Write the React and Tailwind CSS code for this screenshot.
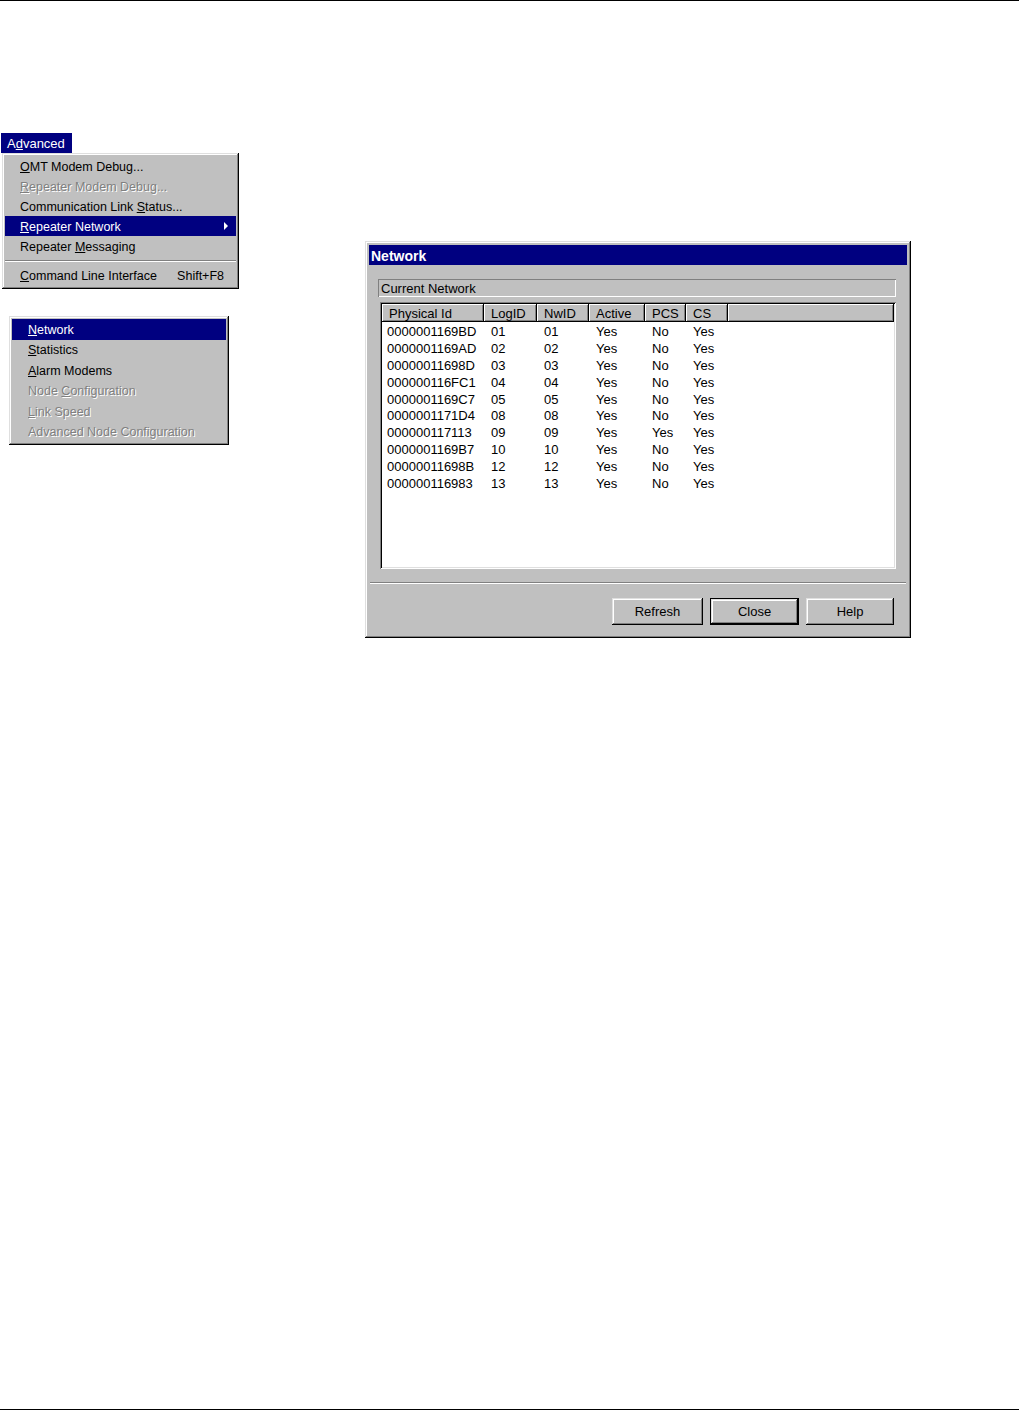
import React from "react";

const FONT = "font-['Liberation_Sans',Arial,sans-serif]";
const DIS = "text-[#808080] [text-shadow:1px_1px_0_#ffffff]";
const RAISED =
  "shadow-[inset_-1px_-1px_0_#000000,inset_1px_1px_0_#dfdfdf,inset_-2px_-2px_0_#808080,inset_2px_2px_0_#ffffff]";

function MenuItem({ children, disabled, hl, arrow, shortcut, h = "h-[20px] pt-[2px]", pl = "pl-[15px]" }) {
  return (
    <div
      className={`${h} ${pl} flex items-center pr-[12px] whitespace-nowrap ${
        hl ? "bg-[#000080] text-white" : disabled ? DIS : "text-black"
      }`}
    >
      <span className="flex-1">{children}</span>
      {shortcut && <span>{shortcut}</span>}
      {arrow && (
        <svg width="5" height="8" viewBox="0 0 5 8" className="mr-[-5px] mt-[-2px]">
          <path d="M0 0 L4 4 L0 8 Z" fill={hl ? "#ffffff" : "#000000"} />
        </svg>
      )}
    </div>
  );
}

const rows = [
  ["0000001169BD", "01", "01", "Yes", "No", "Yes"],
  ["0000001169AD", "02", "02", "Yes", "No", "Yes"],
  ["00000011698D", "03", "03", "Yes", "No", "Yes"],
  ["000000116FC1", "04", "04", "Yes", "No", "Yes"],
  ["0000001169C7", "05", "05", "Yes", "No", "Yes"],
  ["0000001171D4", "08", "08", "Yes", "No", "Yes"],
  ["000000117113", "09", "09", "Yes", "Yes", "Yes"],
  ["0000001169B7", "10", "10", "Yes", "No", "Yes"],
  ["00000011698B", "12", "12", "Yes", "No", "Yes"],
  ["000000116983", "13", "13", "Yes", "No", "Yes"],
];
const headers = ["Physical Id", "LogID", "NwID", "Active", "PCS", "CS"];
const widths = ["w-[102px]", "w-[53px]", "w-[52px]", "w-[56px]", "w-[41px]", "w-[42px]"];

function Btn({ children, def }) {
  return (
    <div
      className={`h-[27px] flex items-center justify-center bg-[#c0c0c0] text-[13px] text-black ${
        def ? "border border-black" : ""
      }`}
      style={{ width: def ? 89 : children === "Help" ? 88 : 91 }}
    >
      <div className={`w-full h-full flex items-center justify-center ${RAISED}`}>{children}</div>
    </div>
  );
}

export default function App() {
  return (
    <div className={`w-[1019px] h-[1411px] bg-white flex flex-col ${FONT} text-[12.5px] leading-none`}>
      <div className="h-px bg-black w-full" />
      <div className="flex items-start mt-[132px]">
        {/* Left column: menus */}
        <div className="ml-[1px] w-[238px] flex flex-col">
          <div className="w-[71px] h-[20px] pt-[1px] bg-[#000080] text-white flex items-center pl-[6px] text-[13px]">
            A<u>d</u>vanced
          </div>
          <div className={`ml-[1px] w-[237px] bg-[#c0c0c0] p-[3px] pb-[4px] ${RAISED}`}>
            <MenuItem>
              <u>O</u>MT Modem Debug...
            </MenuItem>
            <MenuItem disabled>
              <u>R</u>epeater Modem Debug...
            </MenuItem>
            <MenuItem>
              Communication Link <u>S</u>tatus...
            </MenuItem>
            <MenuItem hl arrow>
              <u>R</u>epeater Network
            </MenuItem>
            <MenuItem>
              Repeater <u>M</u>essaging
            </MenuItem>
            <div className="h-[9px] flex flex-col justify-center">
              <div className="h-px bg-[#808080]" />
              <div className="h-px bg-white" />
            </div>
            <MenuItem shortcut="Shift+F8">
              <u>C</u>ommand Line Interface
            </MenuItem>
          </div>

          <div className={`mt-[27px] ml-[8px] w-[220px] bg-[#c0c0c0] p-[3px] ${RAISED}`}>
            <MenuItem hl h="h-[20.5px] pt-[1px]" pl="pl-[16px]">
              <u>N</u>etwork
            </MenuItem>
            <MenuItem h="h-[20.5px] pt-[1px]" pl="pl-[16px]">
              <u>S</u>tatistics
            </MenuItem>
            <MenuItem h="h-[20.5px] pt-[1px]" pl="pl-[16px]">
              <u>A</u>larm Modems
            </MenuItem>
            <MenuItem disabled h="h-[20.5px] pt-[1px]" pl="pl-[16px]">
              Node <u>C</u>onfiguration
            </MenuItem>
            <MenuItem disabled h="h-[20.5px] pt-[1px]" pl="pl-[16px]">
              <u>L</u>ink Speed
            </MenuItem>
            <MenuItem disabled h="h-[20.5px] pt-[1px]" pl="pl-[16px]">
              Advanced Node Configuration
            </MenuItem>
          </div>
        </div>

        {/* Dialog */}
        <div className={`ml-[126px] mt-[108px] w-[546px] h-[397px] bg-[#c0c0c0] p-[4px] flex flex-col ${RAISED}`}>
          <div className="h-[20px] bg-[#000080] text-white font-bold text-[14px] flex items-center pl-[2px] pt-[1px]">
            Network
          </div>
          <div className="pl-[9px] pr-[11px] pt-[14px] flex flex-col">
            <div className="h-[18px] flex items-center pl-[3px] pt-[1px] text-black text-[13px] shadow-[inset_1px_1px_0_#808080,inset_-1px_-1px_0_#ffffff]">
              Current Network
            </div>
            <div className="mt-[5px] ml-[2px] h-[267px] bg-white p-[2px] flex flex-col shadow-[inset_1px_1px_0_#808080,inset_-1px_-1px_0_#ffffff,inset_2px_2px_0_#000000,inset_-2px_-2px_0_#dfdfdf] text-[13px] text-black">
              <div className="flex h-[18px] shrink-0">
                {headers.map((h, i) => (
                  <div
                    key={h}
                    className={`${widths[i]} h-full bg-[#c0c0c0] flex items-center pt-[1px] ${
                      i === 0 ? "pl-[7px]" : "pl-[7px]"
                    } shadow-[inset_-1px_-1px_0_#000000,inset_1px_1px_0_#ffffff,inset_-2px_-2px_0_#808080]`}
                  >
                    {h}
                  </div>
                ))}
                <div className="flex-1 h-full bg-[#c0c0c0] shadow-[inset_-1px_-1px_0_#000000,inset_1px_1px_0_#ffffff,inset_-2px_-2px_0_#808080]" />
              </div>
              <div className="flex flex-col pt-[1px]">
                {rows.map((r) => (
                  <div key={r[0]} className="flex h-[16.9px] items-center">
                    {r.map((c, i) => (
                      <div key={i} className={`${widths[i]} ${i === 0 ? "pl-[5px]" : "pl-[7px]"} whitespace-nowrap`}>
                        {c}
                      </div>
                    ))}
                  </div>
                ))}
              </div>
            </div>
          </div>
          <div className="mt-[13px] mx-[1px] flex flex-col">
            <div className="h-px bg-[#808080]" />
            <div className="h-px bg-white" />
          </div>
          <div className="mt-[14px] flex justify-end gap-[7px] pr-[13px]">
            <Btn>Refresh</Btn>
            <Btn def>Close</Btn>
            <Btn>Help</Btn>
          </div>
        </div>
      </div>
      <div className="mt-auto h-px bg-black w-full mb-[1px]" />
    </div>
  );
}
